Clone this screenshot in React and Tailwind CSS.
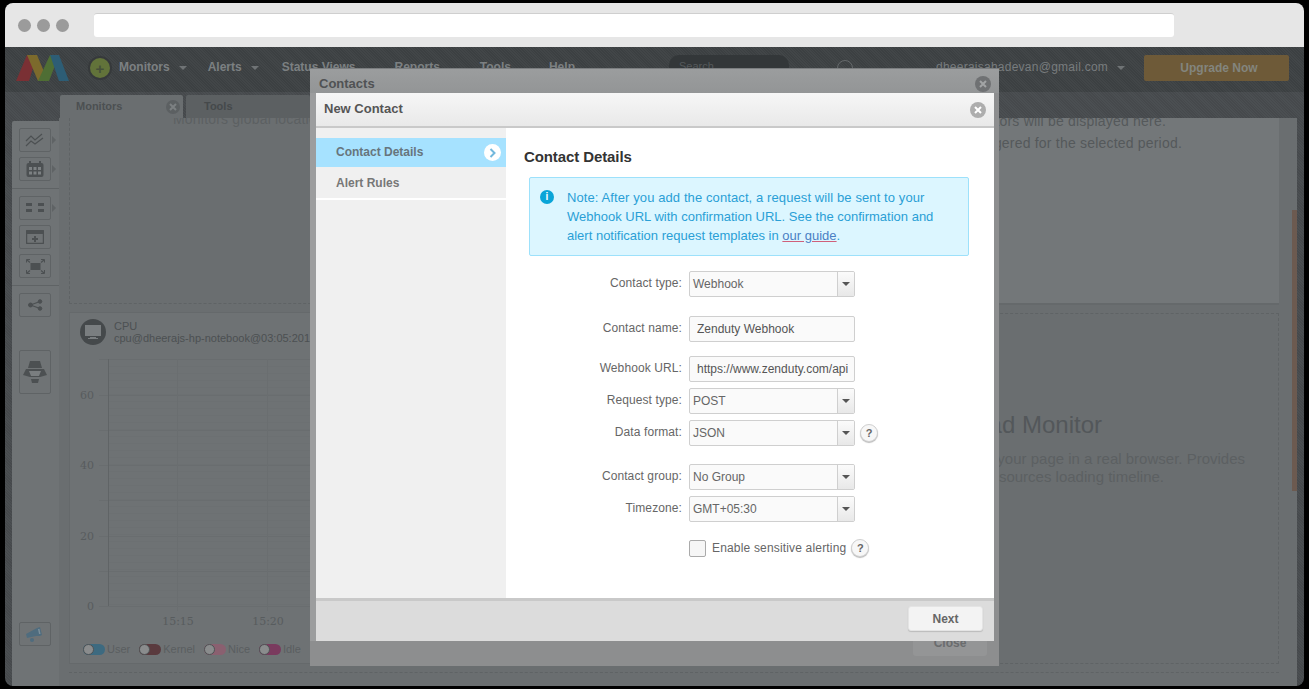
const sans = { fontFamily: '"Liberation Sans", Arial, sans-serif' };

const NavItem = ({ label, caret, className }) => (
  <div className={`mb-[3px] flex items-center gap-[9px] text-[12px] font-bold text-[#7c8082] ${className}`}>
    <span>{label}</span>
    {caret && <span className="mt-[3px] h-0 w-0 border-x-[4px] border-t-[4px] border-x-transparent border-t-[#6f7375]" />}
  </div>
);

const SideButton = ({ children, h = "h-[24px]", arrow }) => (
  <div className="relative">
    <div className={`flex w-[32px] ${h} items-center justify-center rounded-[2px] border border-[#5f6365] bg-[#6f7375]`}>
      {children}
    </div>
    {arrow && <span className="absolute left-[33px] top-[8px] h-0 w-0 border-y-[4px] border-l-[4px] border-y-transparent border-l-[#5f6365]" />}
  </div>
);

const Sidebar = () => (
  <div className="mt-[3px] flex w-[47px] shrink-0 flex-col rounded-tl-[2px] bg-[#6f7375] pt-[7px]">
    <div className="flex flex-col gap-[5px] pl-[7px]">
      <SideButton arrow>
        <svg width="20" height="14" viewBox="0 0 20 14" fill="none" stroke="#4c5052" strokeWidth="1.2">
          <path d="M1 8l5-5 4 4 7-6M1 13l5-5 4 3 8-6" />
        </svg>
      </SideButton>
      <SideButton arrow>
        <svg width="18" height="16" viewBox="0 0 18 16">
          <rect x="0.5" y="2" width="17" height="14" rx="2" fill="#4c5052" />
          <rect x="3" y="0" width="2" height="3" fill="#4c5052" />
          <rect x="13" y="0" width="2" height="3" fill="#4c5052" />
          <path d="M3 6h3v3H3zM7.500 6h3v3h-3zM12 6h3v3h-3zM3 10.500h3v3H3zM7.500 10.500h3v3h-3zM12 10.500h3v3h-3z" fill="#7d8183" />
        </svg>
      </SideButton>
    </div>
    <div className="mt-[7px] border-t border-[#5f6365]" />
    <div className="mt-[7px] flex flex-col gap-[5px] pl-[7px]">
      <SideButton arrow>
        <svg width="18" height="10" viewBox="0 0 18 10" fill="#4c5052">
          <path d="M0 0h6v3H0zM12 0h6v3h-6zM0 6h6v3H0zM12 6h6v3h-6z" />
        </svg>
      </SideButton>
      <SideButton>
        <svg width="18" height="14" viewBox="0 0 18 14">
          <rect x="0.500" y="0.500" width="17" height="13" rx="1" fill="none" stroke="#4c5052" strokeWidth="1.500" />
          <path d="M1 1h16v3H1zM8 6h2v2h2v2h-2v2H8v-2H6V8h2z" fill="#4c5052" />
        </svg>
      </SideButton>
      <SideButton>
        <svg width="19" height="15" viewBox="0 0 19 15">
          <rect x="4.500" y="4" width="10" height="7" fill="#4c5052" />
          <path d="M1 1l3 2.500M18 1l-3 2.500M1 14l3-2.500M18 14l-3-2.500" stroke="#4c5052" strokeWidth="1.200" />
          <path d="M0.500 3.500V0.500H4M15 0.500h3.500V3.500M0.500 11v3.500H4M15 14.500h3.500V11" fill="none" stroke="#4c5052" />
        </svg>
      </SideButton>
    </div>
    <div className="mt-[7px] border-t border-[#5f6365]" />
    <div className="mt-[7px] pl-[7px]">
      <SideButton>
        <svg width="15" height="12" viewBox="0 0 15 12" fill="#4c5052" stroke="#4c5052">
          <circle cx="2.500" cy="6" r="2" />
          <circle cx="12" cy="2.500" r="1.800" />
          <circle cx="12" cy="9.500" r="1.800" />
          <path d="M2.500 6L12 2.500M2.500 6L12 9.500" fill="none" strokeWidth="1.300" />
        </svg>
      </SideButton>
    </div>
    <div className="mt-[33px] pl-[7px]">
      <SideButton h="h-[44px]">
        <svg width="24" height="23" viewBox="0 0 24 23">
          <path d="M7 0h10l2 7H5zM3 8h18l3 6-7 2H7l-7-2zM8 18h8l-1 4H9z" fill="#4c5052" />
          <path d="M6 10h12l-2 5H8z" fill="#7a7e80" />
        </svg>
      </SideButton>
    </div>
    <div className="mt-[228px] pl-[7px]">
      <SideButton>
        <svg width="18" height="15" viewBox="0 0 18 15" fill="#4f6c7e">
          <path d="M0 7l11-6 3-1 2 8-2 1-4 0L1 11z" />
          <circle cx="6" cy="13" r="2" />
          <path d="M12 2l1.500 0 1 5-1.500 0z" fill="#7b8f9b" />
        </svg>
      </SideButton>
    </div>
  </div>
);

const Toggle = ({ color, label }) => (
  <div className="flex items-center gap-[2px]">
    <div className={`relative h-[11px] w-[22px] rounded-full ${color}`}>
      <span className="absolute left-0 top-0 h-[11px] w-[11px] rounded-full border border-[#4e5254] bg-[#8a8c8d]" />
    </div>
    <span className="text-[11px] text-[#5a5e60]">{label}</span>
  </div>
);

const Chart = () => {
  const fine = [];
  for (let y = 365; y < 605; y += 7) fine.push(y);
  return (
    <svg width="241" height="288" viewBox="69 340 241 288" className="block">
      {fine.map((y) => (
        <line key={y} x1="107" x2="310" y1={y + 0.5} y2={y + 0.5} stroke="#6c7072" />
      ))}
      {[358, 394, 429, 464, 499, 535, 570, 605].map((y) => (
        <line key={y} x1="98" x2="310" y1={y + 0.5} y2={y + 0.5} stroke="#696d6f" />
      ))}
      <line x1="107.500" x2="107.500" y1="358" y2="605" stroke="#606466" />
      <line x1="176.500" x2="176.500" y1="358" y2="610" stroke="#6a6e70" />
      <line x1="266.500" x2="266.500" y1="358" y2="610" stroke="#6a6e70" />
      {[["60", 398], ["40", 468], ["20", 539], ["0", 609]].map(([t, y]) => (
        <text key={t} x="93" y={y} textAnchor="end" fontFamily='"DejaVu Serif", serif' fontSize="11" fill="#585c5e">{t}</text>
      ))}
      <text x="177" y="624" textAnchor="middle" fontFamily='"DejaVu Serif", serif' fontSize="11" fill="#585c5e">15:15</text>
      <text x="267" y="624" textAnchor="middle" fontFamily='"DejaVu Serif", serif' fontSize="11" fill="#585c5e">15:20</text>
    </svg>
  );
};

const CpuCard = () => (
  <div className="flex h-[352px] flex-col overflow-hidden border border-[#65696b] bg-[#6e7274]">
    <div className="flex items-center pl-[10px] pt-[6px]">
      <div className="flex h-[26px] w-[26px] shrink-0 items-center justify-center rounded-full bg-[#45494b]">
        <svg width="16" height="15" viewBox="0 0 16 15" fill="#7a7e80">
          <path d="M0 0h16v11H0zM5 12h6v1h2v1H3v-1h2z" />
        </svg>
      </div>
      <div className="ml-[8px] whitespace-nowrap text-[11px] leading-[12px] text-[#4c5052]">
        <div>CPU</div>
        <div>cpu@dheerajs-hp-notebook@03:05:2019</div>
      </div>
    </div>
    <div className="mt-[-4px]">
      <Chart />
    </div>
    <div className="mt-[12px] flex items-center gap-[9px] pl-[13px]">
      <Toggle color="bg-[#3d6a80]" label="User" />
      <Toggle color="bg-[#5a3a3e]" label="Kernel" />
      <Toggle color="bg-[#8a6070]" label="Nice" />
      <Toggle color="bg-[#7a3a5e]" label="Idle" />
    </div>
  </div>
);

const Background = () => (
  <div className="flex h-[639px] flex-col bg-[repeating-linear-gradient(45deg,#4b4f52_0,#4b4f52_1px,#46494c_1px,#46494c_2px)]">
    <div className="flex h-[45px] shrink-0 items-center bg-[repeating-linear-gradient(45deg,#424648_0,#424648_1px,#3c4042_1px,#3c4042_2px)] pb-[3px]">
      <svg width="54" height="26" viewBox="0 0 54 26" className="ml-[11px]">
        <path d="M0 26L11 0h10L13 26z" fill="#7a3034" />
        <path d="M11 0h10l11 26H22z" fill="#7c6a2c" />
        <path d="M22 26L34 0h9L33 26z" fill="#4f6e34" />
        <path d="M34 0h9l10 26H43z" fill="#2d5d75" />
      </svg>
      <div className="ml-[20px] flex h-[20px] w-[20px] items-center justify-center rounded-full bg-[#62733a] text-[15px] font-bold leading-none text-[#46503a] shadow-[0_0_0_2px_#36393b]">+</div>
      <NavItem label="Monitors" caret className="ml-[9px]" />
      <NavItem label="Alerts" caret className="ml-[21px]" />
      <NavItem label="Status Views" className="ml-[23px]" />
      <NavItem label="Reports" className="ml-[39px]" />
      <NavItem label="Tools" className="ml-[40px]" />
      <NavItem label="Help" className="ml-[38px]" />
      <div className="ml-[94px] h-[26px] w-[120px] rounded-[10px] bg-[#333739] pl-[10px] pt-[3px] text-[11px] text-[#55595b]">Search</div>
      <div className="ml-[48px] h-[16px] w-[16px] rounded-full border border-[#65696b]" />
      <div className="mb-[3px] ml-[83px] flex items-center gap-[9px] text-[12px] tracking-[0.25px] text-[#787c7e]">
        <span>dheerajsahadevan@gmail.com</span>
        <span className="mt-[3px] h-0 w-0 border-x-[4px] border-t-[4px] border-x-transparent border-t-[#6f7375]" />
      </div>
      <div className="ml-auto mr-[15px] flex h-[26px] w-[145px] items-center justify-center rounded-[2px] bg-[#6e5a38] pl-[5px] text-[12px] font-bold text-[#83857e]">Upgrade Now</div>
    </div>
    <div className="flex h-[26px] shrink-0 items-end pl-[55px]">
      <div className="flex h-[23px] w-[123px] items-start justify-between rounded-t-[2px] bg-[#6a6e70] pl-[16px] pr-[3px] pt-[3px] text-[11px] font-bold text-[#4c5052]">
        <span>Monitors</span>
        <CloseIcon className="mt-[2px] h-[14px]! w-[14px]! bg-[#5c6062]" stroke="#7c8082" />
      </div>
      <div className="ml-[3px] h-[23px] w-[124px] rounded-t-[2px] bg-[#5c6062] pl-[18px] pt-[3px] text-[11px] font-bold text-[#45494b]">Tools</div>
    </div>
    <div className="flex min-h-0 flex-1 pl-[7px] pr-[7px]">
      <Sidebar />
      <div className="min-w-0 flex-1 bg-[#6a6e70] pl-[10px]">
        <div className="grid grid-cols-[600px_1fr]">
          <div className="pr-[9px]">
            <div className="h-[186px] overflow-hidden border-x border-b border-dashed border-[#5f6365] text-[14px] leading-[22px] tracking-[0.2px] text-[#5c6062]">
              <div className="mt-[-10px] whitespace-nowrap pl-[103px]">Monitors global locations</div>
            </div>
            <div className="mt-[8px]">
              <CpuCard />
            </div>
          </div>
          <div>
            <div className="h-[187px] overflow-hidden border-b-2 border-[#65696b] bg-[#737779] pr-[113px] text-right text-[14px] leading-[22px] tracking-[0.2px] text-[#55595b]">
              <div className="mt-[-8px]">Monitors will be displayed here.</div>
              <div className="mr-[-16px]">No alerts were triggered for the selected period.</div>
            </div>
            <div className="mt-[8px] h-[351px] border border-dashed border-[#5f6365] pr-[176px] pt-[96px] text-right">
              <div className="text-[24px] leading-[30px] text-[#53575a]">Webpage Load Monitor</div>
              <div className="mt-[10px] text-[15px] leading-[18px] text-[#5c6062]">
                <div className="mr-[-143px]">Loads your page in a real browser. Provides</div>
                <div className="mr-[-62px]">detailed resources loading timeline.</div>
              </div>
            </div>
          </div>
        </div>
        <div className="mt-[8px] border-t border-dashed border-[#5f6365]" />
      </div>
      <div className="relative w-[18px] shrink-0 bg-[#6a6e70]">
        <div className="absolute right-0 top-[92px] h-[281px] w-[5px] bg-[#6c5a50]" />
      </div>
    </div>
  </div>
);

const Caret = () => (
  <span className="h-0 w-0 border-x-[4px] border-t-[4px] border-x-transparent border-t-[#555]" />
);

const SelectBox = ({ value }) => (
  <div className="flex h-[26px] w-[166px] overflow-hidden rounded-[2px] border border-[#cfcfcf] bg-[#fafafa]">
    <div className="flex-1 pl-[3px] text-[12px] leading-[24px] text-[#666]">{value}</div>
    <div className="flex w-[17px] items-center justify-center border-l border-[#cfcfcf] bg-gradient-to-b from-[#fbfbfb] to-[#e8e8e8]">
      <Caret />
    </div>
  </div>
);

const TextBox = ({ value }) => (
  <input
    readOnly
    value={value}
    style={sans}
    className="h-[26px] w-[166px] rounded-[2px] border border-[#cfcfcf] bg-[#fafafa] pl-[7px] pr-[6px] text-[12px] text-[#555] outline-none"
  />
);

const Help = () => (
  <span className="flex h-[18px] w-[18px] items-center justify-center rounded-full border border-[#d0d0d0] bg-[#f7f7f7] text-[11px] font-bold text-[#666] shadow-[0_1px_1px_#bbb]">?</span>
);

const Row = ({ label, children, className }) => (
  <div className={`flex items-center ${className}`}>
    <label className="mt-[-3px] w-[176px] text-right text-[12px] tracking-[0.1px] text-[#666]">{label}</label>
    <div className="ml-[7px] flex items-center gap-[5px]">{children}</div>
  </div>
);

function CloseIcon({ className, stroke = "#fff" }) {
  return (
    <span className={`flex h-[16px] w-[16px] shrink-0 items-center justify-center rounded-full ${className}`}>
      <svg width="8" height="8" viewBox="0 0 8 8" stroke={stroke} strokeWidth="2">
        <path d="M1 1l6 6M7 1L1 7" />
      </svg>
    </span>
  );
}

const NewContact = () => (
  <div className="relative z-10 flex h-[548px] w-[678px] flex-col bg-white">
    <div className="flex h-[35px] shrink-0 items-center justify-between border-b-2 border-[#c9c9c9] bg-gradient-to-b from-[#f6f6f6] to-[#e9e9e9] pl-[8px] pr-[8px]">
      <span className="mt-[-1px] text-[13px] font-bold text-[#555]">New Contact</span>
      <CloseIcon className="bg-[#adadad]" />
    </div>
    <div className="flex min-h-0 flex-1">
      <div className="w-[190px] shrink-0 bg-[#f0f0f0] pt-[10px]">
        <div className="relative h-[29px] bg-[#a6e2ff] pl-[20px] text-[12px] font-bold leading-[29px] text-[#66757d]">
          Contact Details
          <span className="absolute right-[5px] top-[6px] flex h-[17px] w-[17px] items-center justify-center rounded-full bg-white">
            <svg width="7" height="10" viewBox="0 0 7 10" fill="none" stroke="#72b8dc" strokeWidth="2">
              <path d="M1.500 1l4 4-4 4" />
            </svg>
          </span>
        </div>
        <div className="mt-[2px] box-content h-[29px] border-b-2 border-white pl-[20px] text-[12px] font-bold leading-[29px] text-[#777]">Alert Rules</div>
      </div>
      <div className="min-w-0 flex-1 pt-[20px]">
        <h2 className="pl-[18px] text-[15px] font-bold leading-[18px] tracking-[-0.1px] text-[#333]">Contact Details</h2>
        <div className="relative ml-[23px] mt-[11px] h-[79px] w-[440px] rounded-[2px] border border-[#9de1fb] bg-[#dcf6ff] pl-[37px] pt-[10px] text-[13px] leading-[19px] text-[#2a9fd6]">
          <span className="absolute left-[10px] top-[12px] flex h-[14px] w-[14px] items-center justify-center rounded-full bg-[#0aa5d8] text-[10px] font-bold leading-none text-white">i</span>
          <div className="tracking-[0.1px]">Note: After you add the contact, a request will be sent to your</div>
          <div>Webhook URL with confirmation URL. See the confirmation and</div>
          <div>
            alert notification request templates in{" "}
            <span className="text-[#4a7fc4] underline decoration-[#d0607a]">our guide</span>.
          </div>
        </div>
        <Row label="Contact type:" className="mt-[15px]"><SelectBox value="Webhook" /></Row>
        <Row label="Contact name:" className="mt-[19px]"><TextBox value="Zenduty Webhook" /></Row>
        <Row label="Webhook URL:" className="mt-[14px]"><TextBox value="https://www.zenduty.com/api/integrations/" /></Row>
        <Row label="Request type:" className="mt-[6px]"><SelectBox value="POST" /></Row>
        <Row label="Data format:" className="mt-[6px]"><SelectBox value="JSON" /><Help /></Row>
        <Row label="Contact group:" className="mt-[18px]"><SelectBox value="No Group" /></Row>
        <Row label="Timezone:" className="mt-[6px]"><SelectBox value="GMT+05:30" /></Row>
        <div className="mt-[17px] flex items-center pl-[183px]">
          <span className="h-[17px] w-[17px] rounded-[2px] border border-[#aaa] bg-[#f6f6f6]" />
          <span className="ml-[6px] text-[12px] tracking-[0.17px] text-[#666]">Enable sensitive alerting</span>
          <span className="ml-[5px]"><Help /></span>
        </div>
      </div>
    </div>
    <div className="flex h-[43px] shrink-0 items-start justify-end border-t-[3px] border-[#c9c9c9] bg-[#dcdcdc] pr-[11px] pt-[5px]">
      <div className="flex h-[25px] w-[75px] items-center justify-center rounded-[3px] border border-[#e4e4e4] bg-[#f3f3f3] text-[12px] font-bold text-[#666] shadow-[0_1px_1px_#bbb]">Next</div>
    </div>
  </div>
);

const ContactsModal = () => (
  <div className="absolute left-[310px] top-[68px] flex h-[598px] w-[689px] flex-col border-t border-[#7b7e80] bg-[#8d8e8f]">
    <div className="flex h-[24px] shrink-0 items-center justify-between bg-gradient-to-b from-[#9b9d9e] to-[#939596] pl-[9px] pr-[8px] pt-[5px]">
      <span className="text-[13px] font-bold text-[#505254]">Contacts</span>
      <CloseIcon className="bg-[#6f7173]" stroke="#a2a4a5" />
    </div>
    <div className="border-l-[6px] border-[#9c9d9e]">
      <NewContact />
    </div>
    <div className="flex flex-1 items-start justify-end pr-[12px]">
      <div className="mt-[-11px] flex h-[26px] w-[74px] items-end justify-center rounded-[3px] bg-[#949596] pb-[6px] text-[12px] font-bold leading-[14px] text-[#6a6c6e]">Close</div>
    </div>
  </div>
);

const App = () => (
  <div style={sans} className="relative h-[689px] w-[1309px] overflow-hidden bg-black">
    <div className="ml-[5px] mt-[3px] h-[683px] w-[1299px] overflow-hidden rounded-[8px]">
      <div className="flex h-[44px] items-center bg-[#e6e6e6] pl-[13px]">
        <div className="flex gap-[6px]">
          <span className="h-[13px] w-[13px] rounded-full bg-[#9b9b9b]" />
          <span className="h-[13px] w-[13px] rounded-full bg-[#9b9b9b]" />
          <span className="h-[13px] w-[13px] rounded-full bg-[#9b9b9b]" />
        </div>
        <div className="ml-[25px] h-[24px] w-[1080px] rounded-[3px] border-t border-[#cfcfcf] bg-white" />
      </div>
      <Background />
    </div>
    <ContactsModal />
  </div>
);

export default App;
